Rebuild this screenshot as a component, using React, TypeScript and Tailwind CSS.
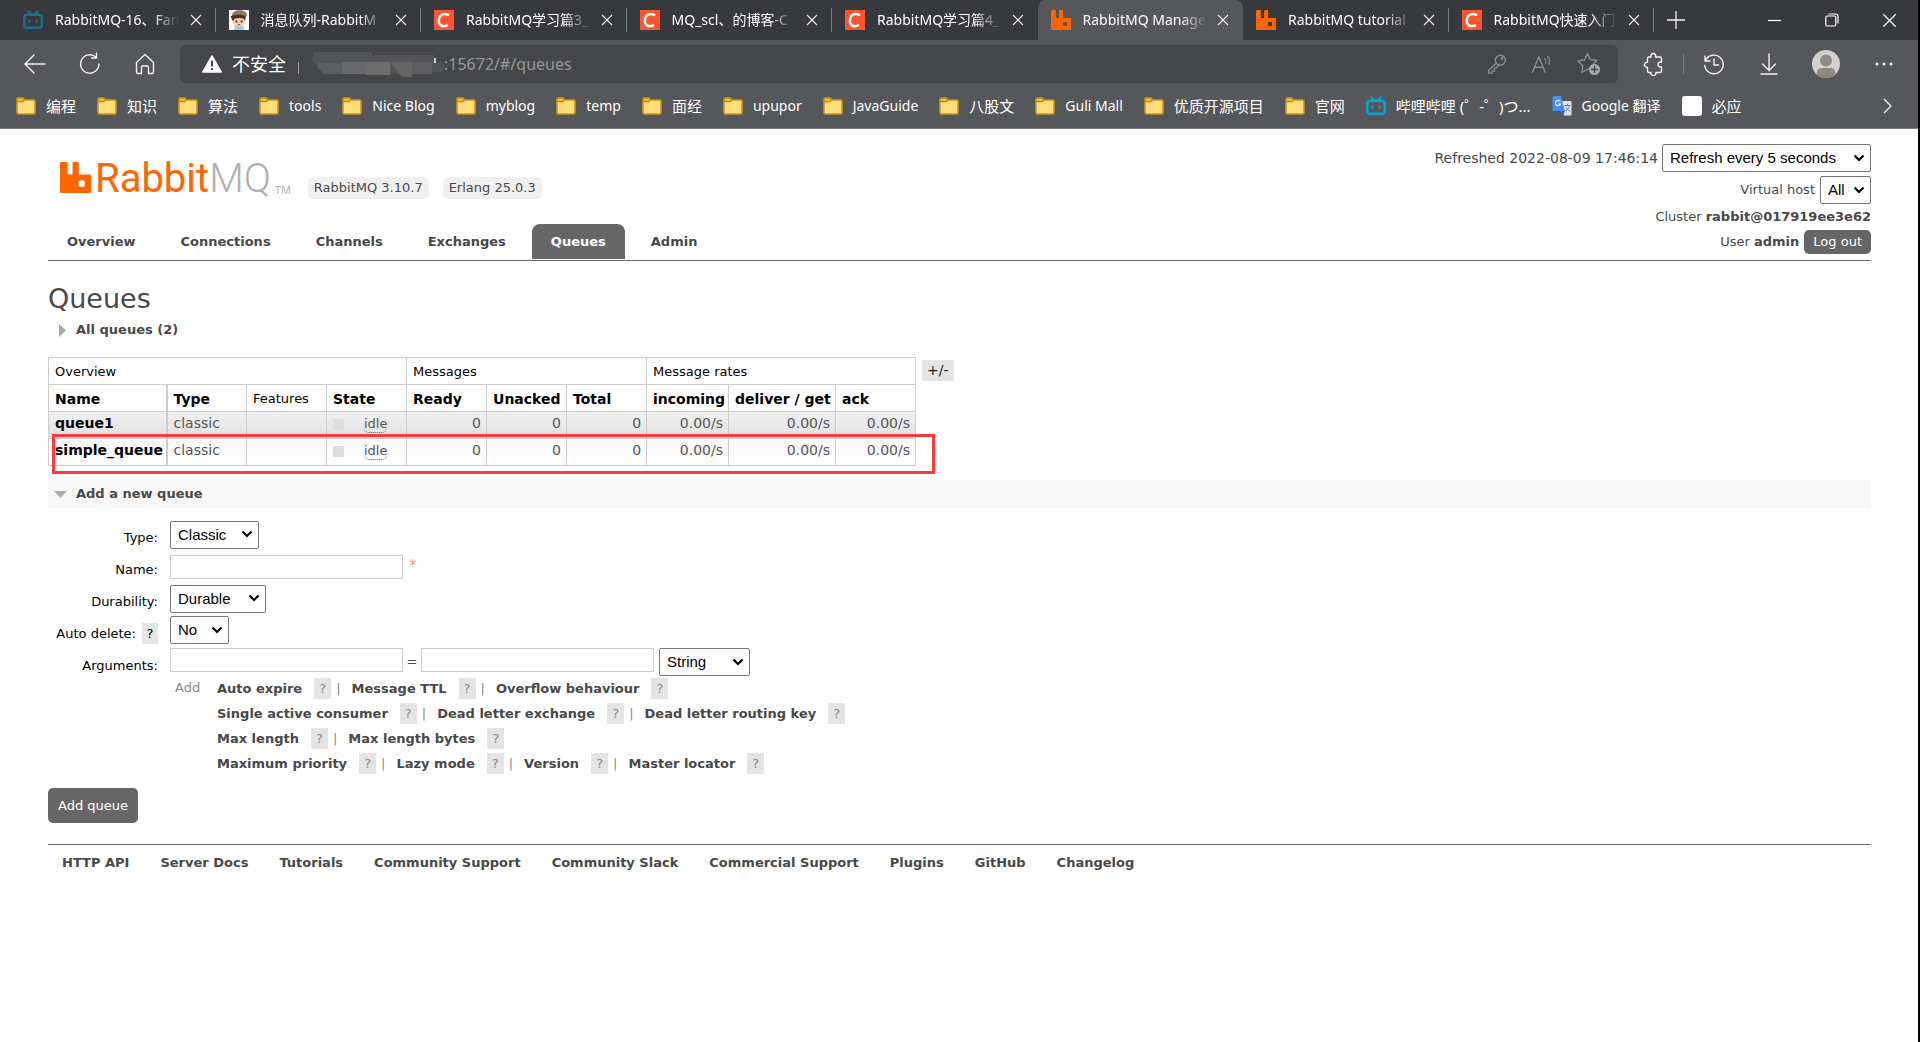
import React from "react";

const UI = "font-['Noto_Sans','Noto_Sans_CJK_SC',sans-serif]";

/* ---------- icons ---------- */

function Bilibili({ color }: { color: string }) {
  return (
    <svg width="20" height="20" viewBox="0 0 20 20" fill="none" stroke={color} strokeWidth="2.4" strokeLinecap="round" className="shrink-0">
      <rect x="1.3" y="4.8" width="17.4" height="13" rx="2.6" />
      <path d="M5.5 1.3 8 4.4M14.5 1.3 12 4.4" strokeWidth="2" />
      <path d="M6.4 10.2v1.6M13.6 10.2v1.6" strokeWidth="2" />
    </svg>
  );
}

function Portrait() {
  return (
    <svg width="20" height="20" viewBox="0 0 20 20" className="shrink-0">
      <rect width="20" height="20" fill="#fff" />
      <path d="M5.500 15.500h9l.8 4.500H4.700z" fill="#8fd3ea" />
      <path d="M7 16l-2 2M13 16l2 2" stroke="#f6cdb0" strokeWidth="1.500" />
      <path d="M4.200 6h11.600v6.500c0 2.300-2.600 4-5.800 4s-5.800-1.700-5.800-4z" fill="#f6cdb0" />
      <path d="M3 6.500C3 2.500 5.500.3 10.500.3S18 2.500 18 6l-2.500 1.200-5.500-.6-6 .9z" fill="#8a7a62" />
      <path d="M1.500 6.500c3-2.300 12-2.600 15.500.3l-1 4.200-1.500-2.500-5-.6-4 .8L4 11.500z" fill="#5b2c20" />
      <rect x="6.600" y="10.500" width="1.600" height="2" fill="#3a1d18" />
      <rect x="11.800" y="10.500" width="1.600" height="2" fill="#3a1d18" />
      <path d="M8.300 14h3.400l-1.700 1.400z" fill="#c0392b" />
    </svg>
  );
}

function Csdn() {
  return (
    <svg width="20" height="20" viewBox="0 0 20 20" className="shrink-0">
      <rect width="20" height="20" fill="#fc5531" />
      <path d="M15 5.400C13.800 4.400 12.400 4 10.900 4 7.300 4 5 6.800 4.800 10.400 4.600 13.900 6.500 16.200 9.700 16.200c1.600 0 3-.4 4.200-1.200" fill="none" stroke="#fff" strokeWidth="2.500" />
    </svg>
  );
}

function RabbitMark({ size, hole }: { size: number; hole: string }) {
  return (
    <svg width={size} height={size} viewBox="0 0 20 20" className="shrink-0">
      <path d="M.8 0h3.400q.7 0 .7.7V7.400q0 .6.600.6h2q.600 0 .600-.600V.7q0-.7.7-.7h2.600q.7 0 .7.7V7.400q0 .6.600.6h6.500q.8 0 .8.8v10.400q0 .8-.8.8H.8q-.8 0-.8-.8V.8Q0 0 .8 0z" fill="#f60" />
      <rect x="12" y="12" width="4" height="4" rx="1" fill={hole} />
    </svg>
  );
}

function Folder() {
  return (
    <svg width="20" height="18" viewBox="0 0 20 18" className="shrink-0">
      <path d="M1 2.500Q1 1 2.500 1H7l2 2h8.500Q19 3 19 4.500v11q0 1.500-1.500 1.500h-15Q1 17 1 15.500z" fill="#ffdc7c" stroke="#c79a1c" strokeWidth="1.600" />
      <path d="M1 2.500Q1 1 2.500 1H7l1.600 1.800L7 4.600H1z" fill="#f3bd2e" stroke="#b8860b" strokeWidth="1.200" />
    </svg>
  );
}

function Translate() {
  return (
    <svg width="20" height="20" viewBox="0 0 20 20" className="shrink-0">
      <path d="M9 5h9.500q1 0 1 1v12.500q0 1-1 1H12z" fill="#e1e3e6" />
      <path d="M1.500 0H9l4 15H1.500q-1 0-1-1V1q0-1 1-1z" fill="#4a8af4" />
      <path d="M8 15h5l-1.500 4z" fill="#3367d6" />
      <path d="M8.300 5.600A2.600 2.600 0 1 0 8.500 8H6.300" fill="none" stroke="#fff" strokeWidth="1.200" />
      <path d="M12.500 9.500h6M15.500 8v1.500M17.500 9.500c-.5 2.500-2 4.500-4 5.500M14 11c.8 1.800 2 3.300 4 4.300" fill="none" stroke="#6b7480" strokeWidth="1" />
    </svg>
  );
}

function Cross({ size, w }: { size: number; w: number }) {
  return (
    <svg width={size} height={size} viewBox="0 0 12 12" stroke="#f0f0f0" strokeWidth={w}>
      <path d="M1 1l10 10M11 1 1 11" />
    </svg>
  );
}

function Line({ children, size = 24, color = "#f2f2f2", w = 1.4 }: { children: React.ReactNode; size?: number; color?: string; w?: number }) {
  return (
    <svg width={size} height={size} viewBox="0 0 24 24" fill="none" stroke={color} strokeWidth={w} strokeLinecap="round" strokeLinejoin="round" className="shrink-0">
      {children}
    </svg>
  );
}

/* ---------- browser chrome ---------- */

const tabs = [
  { icon: <Bilibili color="#1b6f8c" />, title: "RabbitMQ-16、Fan" },
  { icon: <Portrait />, title: "消息队列-RabbitM" },
  { icon: <Csdn />, title: "RabbitMQ学习篇3_" },
  { icon: <Csdn />, title: "MQ_scl、的博客-C" },
  { icon: <Csdn />, title: "RabbitMQ学习篇4_" },
  { icon: <RabbitMark size={20} hole="#56575b" />, title: "RabbitMQ Manage", active: true },
  { icon: <RabbitMark size={20} hole="#38393c" />, title: "RabbitMQ tutorial" },
  { icon: <Csdn />, title: "RabbitMQ快速入门" },
];

function TabStrip() {
  return (
    <div className="flex h-10 bg-[#38393c] pl-[10px]">
      <div className="flex min-w-0 flex-1">
        {tabs.map((t, i) => (
          <div
            key={i}
            className={
              "flex min-w-0 flex-1 basis-0 items-center pl-[13px] " +
              (t.active ? "rounded-t-lg bg-[#56575b]" : "")
            }
          >
            {t.icon}
            <button className="ml-3 min-w-0 flex-1 overflow-hidden text-left text-sm whitespace-nowrap text-white [mask-image:linear-gradient(to_right,black_78%,transparent)]">
              {t.title}
            </button>
            <button aria-label="Close tab" className="ml-[10px]">
              <Cross size={12} w={1.1} />
            </button>
            <span
              className={
                "ml-[13px] h-6 w-px " +
                (t.active || tabs[i + 1]?.active ? "" : "bg-[#7a7b7e]")
              }
            />
          </div>
        ))}
      </div>
      <div className="flex w-[264px] shrink-0 items-center">
        <button aria-label="New tab" className="ml-[13px]">
          <svg width="18" height="18" viewBox="0 0 18 18" stroke="#f2f2f2" strokeWidth="1.300"><path d="M9 0v18M0 9h18" /></svg>
        </button>
        <button aria-label="Minimize" className="ml-[83px]">
          <svg width="13" height="13" viewBox="0 0 13 13" stroke="#fff" strokeWidth="1.200"><path d="M0 6.500h13" /></svg>
        </button>
        <button aria-label="Restore" className="ml-[44px]">
          <svg width="14" height="14" viewBox="0 0 14 14" fill="none" stroke="#fff" strokeWidth="1.200">
            <rect x=".8" y="3" width="10" height="10" rx="1.500" /><path d="M3.500 1h6.700Q13 1 13 3.800v6.700" />
          </svg>
        </button>
        <button aria-label="Close window" className="ml-[43px]">
          <Cross size={15} w={1.1} />
        </button>
      </div>
    </div>
  );
}

function Toolbar() {
  return (
    <div className="flex h-12 items-center pl-[23px]">
      <button aria-label="Back"><Line><path d="M2 12h20M11 3 2 12l9 9" /></Line></button>
      <button aria-label="Reload" className="ml-[31px]"><Line><path d="M21 12a9.200 9.200 0 1 1-3-6.800M18.500 1v5h-5" /></Line></button>
      <button aria-label="Home" className="ml-[31px]">
        <Line><path d="M3.500 10.500 12 2.500l8.500 8V20q0 1.500-1.500 1.500h-3.500V15q0-1-1-1h-5q-1 0-1 1v6.500H5q-1.500 0-1.500-1.500z" /></Line>
      </button>
      <div className="ml-[23px] flex h-[38px] min-w-0 flex-1 items-center rounded-md bg-[#454649] pr-[17px] pl-[22px]">
        <svg width="20" height="18" viewBox="0 0 20 18" className="shrink-0">
          <path d="M10 .8 19.200 17H.8z" fill="#fff" stroke="#fff" strokeWidth="1.400" strokeLinejoin="round" />
          <path d="M10 5.500v6M10 13v2" stroke="#454649" strokeWidth="2" />
        </svg>
        <span className="ml-[10px] text-lg text-white">不安全</span>
        <span className="mt-2 ml-[12px] h-3 w-px bg-[#a0a0a0]" />
        <svg width="138" height="28" viewBox="0 0 138 28" className="mr-1 ml-[13px] shrink-0">
          <path d="M1 2h59v4l4-1h58v7h7l3 3v5l-4 2h-24l-10 5H96l-6-3H12L6 18 1 11z" fill="#535457" />
          <path d="M6 13h24v11H12L6 18z" fill="#5d5e61" />
          <path d="M30 12h24v12H30z" fill="#66686b" />
          <path d="M54 12h24v13H54z" fill="#6c6d6c" />
          <path d="M78 12h22v15H90z" fill="#666463" />
          <path d="M100 12h20v12h-20z" fill="#5f5d60" />
          <path d="M123 8v5" stroke="#fff" strokeWidth="1.500" />
        </svg>
        <span className="-ml-[10px] truncate text-base text-[#97989b]">:15672/#/queues</span>
        <span className="flex-1" />
        <span className="flex items-center gap-6">
          <Line size={20} color="#8d8e91" w={1.6}><circle cx="16" cy="7.500" r="6" /><circle cx="18" cy="5.500" r=".8" /><path d="m11 11-9 8.500V23h4v-2.500h3V17h2l2.500-3.500" /></Line>
          <Line size={22} color="#8d8e91" w={1.5}><path d="M1.500 21 8.500 4l7 17M4 15.500h9M15 6c1.500 1.500 1.500 3 1 5M18 3.500c2.500 2.500 2.500 6 1.500 9" /></Line>
          <Line size={24} color="#8d8e91" w={1.4}><path d="m10.500 1.500 2.900 6 6.600 1-4.800 4.600M12 16.500l-7.200 4 1.100-6.600L1 9l6.600-1 2.900-6.500" /><circle cx="17.500" cy="17.500" r="5.500" fill="#a9aaac" stroke="none" /><path d="M17.500 14.500v6M14.500 17.500h6" stroke="#454649" /></Line>
        </span>
      </div>
      <div className="flex w-[300px] shrink-0 items-center">
        <button aria-label="Extensions" className="ml-[23px]"><Line><path d="M8 5h2.200a2.400 2.400 0 1 1 4.300 0H19q1.500 0 1.500 1.500v3.700a2.500 2.500 0 1 0 0 4.600v4Q20.500 20.500 19 20.500h-4.200a2.500 2.500 0 1 1-4.800 0H8q-1.500 0-1.500-1.500v-3.700a2.600 2.600 0 1 1 0-5.100V6.500Q6.500 5 8 5z" /></Line></button>
        <span className="ml-[18px] h-5 w-px bg-[#828386]" />
        <button aria-label="History" className="ml-[18px]"><Line><path d="M3 4v5h5M3.500 8.500a9.300 9.300 0 1 1-.8 5M12 7v6h4.500" /></Line></button>
        <button aria-label="Downloads" className="ml-[31px]"><Line><path d="M12 2v16M5.500 12l6.500 6.500 6.500-6.500M4 22h16" /></Line></button>
        <button aria-label="Profile" className="ml-[31px]">
          <svg width="28" height="28" viewBox="0 0 28 28"><circle cx="14" cy="14" r="14" fill="#d3d1cf" /><circle cx="14" cy="10.500" r="6" fill="#8f8985" /><path d="M4.500 24.300Q5 18 9 18h10q4 0 4.500 6.300A14 14 0 0 1 4.500 24.300z" fill="#8f8985" /></svg>
        </button>
        <button aria-label="More" className="ml-[35px]">
          <svg width="18" height="4" viewBox="0 0 18 4" fill="#f2f2f2"><circle cx="2" cy="2" r="1.500" /><circle cx="9" cy="2" r="1.500" /><circle cx="16" cy="2" r="1.500" /></svg>
        </button>
      </div>
    </div>
  );
}

const bookmarks: { label: string; icon?: React.ReactNode; cjk?: boolean }[] = [
  { label: "编程", cjk: true },
  { label: "知识", cjk: true },
  { label: "算法", cjk: true },
  { label: "tools" },
  { label: "Nice Blog" },
  { label: "myblog" },
  { label: "temp" },
  { label: "面经", cjk: true },
  { label: "upupor" },
  { label: "JavaGuide" },
  { label: "八股文", cjk: true },
  { label: "Guli Mall" },
  { label: "优质开源项目", cjk: true },
  { label: "官网", cjk: true },
  { label: "哔哩哔哩 (゜-゜)つ...", cjk: true, icon: <Bilibili color="#0aa4dc" /> },
  { label: "Google 翻译", icon: <Translate /> },
  { label: "必应", cjk: true, icon: <span className="size-5 shrink-0 rounded-[3px] bg-white" /> },
];

function Bookmarks() {
  return (
    <div className="flex h-10 items-center gap-[21px] pr-[25px] pb-1 pl-4 text-white">
      {bookmarks.map((b) => (
        <a key={b.label} href="#" className="flex items-center gap-[10px] whitespace-nowrap">
          {b.icon ?? <Folder />}
          <span className={b.cjk ? "text-[15px]" : "text-sm"}>{b.label}</span>
        </a>
      ))}
      <button aria-label="More bookmarks" className="ml-auto">
        <svg width="10" height="16" viewBox="0 0 10 16" fill="none" stroke="#f2f2f2" strokeWidth="1.300"><path d="m1 1 7 7-7 7" /></svg>
      </button>
    </div>
  );
}

/* ---------- page parts ---------- */

function Select({ id, label, options, className }: { id: string; label?: string; options: string[]; className: string }) {
  return (
    <span className="relative inline-flex">
      <select
        id={id}
        aria-label={label}
        className={"h-7 appearance-none rounded-[2px] border border-[#767676] bg-white pl-[7px] font-['Liberation_Sans',Arial,sans-serif] text-[15px] text-black " + className}
      >
        {options.map((o) => <option key={o}>{o}</option>)}
      </select>
      <svg width="12" height="8" viewBox="0 0 12 8" fill="none" stroke="#000" strokeWidth="2.200" className="pointer-events-none absolute top-[10px] right-[6px]">
        <path d="m1.500 1.500 4.500 4.500 4.500-4.500" />
      </svg>
    </span>
  );
}

const nav = ["Overview", "Connections", "Channels", "Exchanges", "Queues", "Admin"];

function Header() {
  return (
    <header className="flex items-end justify-between border-b border-[#666] pt-[15px]">
      <div className="flex flex-col">
        <div className="flex items-end pl-3">
          <a href="#" aria-label="RabbitMQ" className="flex h-[37px] items-start">
            <RabbitMark size={31} hole="#fff" />
            <span className="ml-1 font-[Roboto,sans-serif] text-[40px] leading-[34px] text-[#f60]">
              Rabbit<span className="font-light text-[#b0b0b0]">MQ</span>
            </span>
            <span className="ml-1 self-end pb-[2px] font-['Open_Sans',sans-serif] text-[11px] leading-[14px] text-[#aaa]">TM</span>
          </a>
          <span className="ml-[17px] rounded-[5px] bg-[#f0f0f0] px-[6px] text-[13px] leading-[22px]">RabbitMQ 3.10.7</span>
          <span className="ml-[14px] rounded-[5px] bg-[#f0f0f0] px-[6px] text-[13px] leading-[22px]">Erlang 25.0.3</span>
        </div>
        <nav className="mt-[25px] flex gap-[7px] pb-px">
          {nav.map((n) => (
            <a
              key={n}
              href="#"
              className={
                "rounded-t-lg px-[19px] text-[13px] leading-[35px] font-bold " +
                (n === "Queues" ? "bg-[#666] text-white" : "")
              }
            >
              {n}
            </a>
          ))}
        </nav>
      </div>
      <div className="flex flex-col items-end pb-[6px] text-[13px]">
        <div className="flex items-center gap-1">
          <span className="text-sm">Refreshed 2022-08-09 17:46:14</span>
          <Select id="refresh" label="Refresh interval" options={["Refresh every 5 seconds"]} className="w-[209px]" />
        </div>
        <div className="mt-1 flex items-center gap-[5px]">
          <label htmlFor="vhost">Virtual host</label>
          <Select id="vhost" options={["All"]} className="w-[51px]" />
        </div>
        <div className="mt-1 leading-[18px]">Cluster <b>rabbit@017919ee3e62</b></div>
        <div className="mt-1 flex items-center gap-[5px]">
          <span>User <b>admin</b></span>
          <button className="h-6 rounded-[5px] bg-[#666] px-[9px] text-white">Log out</button>
        </div>
      </div>
    </header>
  );
}

const queues = [
  { name: "queue1", row: "bg-linear-to-b from-[#f0f0f0] to-[#e0e0e0]" },
  { name: "simple_queue", row: "bg-linear-to-b from-[#f8f8f8] to-white" },
];

const cell = "border border-[#ccc] pr-0 pl-[6px] text-left ";
const widths = ["w-[118px]", "w-[80px]", "w-[80px]", "w-[80px]", "w-[80px]", "w-[80px]", "w-[80px]", "w-[82px]", "w-[107px]", "w-[80px]"];

function QueueTable() {
  return (
    <div className="flex items-start gap-[6px]">
      <div className="relative">
        <table className="w-[867px] table-fixed border-collapse leading-[18px] text-black">
          <colgroup>{widths.map((w, i) => <col key={i} className={w} />)}</colgroup>
          <thead>
            <tr className="h-[27px] text-[13px]">
              <th colSpan={4} className={cell + "pt-[2px] font-normal"}>Overview</th>
              <th colSpan={3} className={cell + "pt-[2px] font-normal"}>Messages</th>
              <th colSpan={3} className={cell + "pt-[2px] font-normal"}>Message rates</th>
            </tr>
            <tr className="h-[27px] text-[14px]">
              <th className={cell + "border-r-2 pt-[2px]"}>Name</th>
              <th className={cell + "pt-[2px]"}>Type</th>
              <th className={cell + "pt-[2px] text-[13px] font-normal"}>Features</th>
              <th className={cell + "pt-[2px]"}>State</th>
              <th className={cell + "pt-[2px]"}>Ready</th>
              <th className={cell + "pt-[2px] whitespace-nowrap"}>Unacked</th>
              <th className={cell + "pt-[2px]"}>Total</th>
              <th className={cell + "pt-[2px] whitespace-nowrap"}>incoming</th>
              <th className={cell + "pt-[2px] whitespace-nowrap"}>deliver / get</th>
              <th className={cell + "pt-[2px]"}>ack</th>
            </tr>
          </thead>
          <tbody>
            {queues.map((q) => (
              <tr key={q.name} className={"h-[27px] text-[14px] text-[#555] " + q.row}>
                <td className={cell + "border-r-2 pb-1"}><a href="#" className="font-bold text-black">{q.name}</a></td>
                <td className={cell + "pb-1"}>classic</td>
                <td className={cell} />
                <td className={cell + "pb-[2px]"}>
                  <span className="flex items-center gap-5 text-[13px]">
                    <span className="size-[11px] bg-[#ddd]" />
                    <span className="rounded-[5px] border-b border-dotted border-[#555] leading-[17px]">idle</span>
                  </span>
                </td>
                {["0", "0", "0", "0.00/s", "0.00/s", "0.00/s"].map((v, i) => (
                  <td key={i} className="border border-[#ccc] pr-[5px] pb-1 text-right">{v}</td>
                ))}
              </tr>
            ))}
          </tbody>
        </table>
        <div className="pointer-events-none absolute -right-[19px] -bottom-2 left-1 h-10 border-[3px] border-[#fc3a3a]" />
      </div>
      <button className="mt-[3px] h-[21px] bg-[#e4e4e4] px-[5px] text-[14px] leading-[21px] text-[#222]">+/-</button>
    </div>
  );
}

const help = "inline-block bg-[#e4e4e4] text-center leading-[21px] ";

const optionRows = [
  ["Auto expire", "Message TTL", "Overflow behaviour"],
  ["Single active consumer", "Dead letter exchange", "Dead letter routing key"],
  ["Max length", "Max length bytes"],
  ["Maximum priority", "Lazy mode", "Version", "Master locator"],
];

const textBox = "h-6 w-[233px] border border-[#ccc] bg-white px-1 text-[13px]";

function Row({ label, htmlFor, hint, children }: { label: string; htmlFor: string; hint?: boolean; children: React.ReactNode }) {
  return (
    <div className="flex h-8 items-start">
      <div className="mr-3 flex w-[110px] justify-end gap-[6px] pt-[7px] leading-[21px] whitespace-nowrap text-black">
        <label htmlFor={htmlFor}>{label}</label>
        {hint && <button type="button" className={help + "w-4"}>?</button>}
      </div>
      {children}
    </div>
  );
}

function AddQueue() {
  return (
    <form className="pt-3 text-[13px]" onSubmit={(e) => e.preventDefault()}>
      <Row label="Type:" htmlFor="type"><Select id="type" options={["Classic"]} className="mt-px w-[89px]" /></Row>
      <Row label="Name:" htmlFor="name">
        <input id="name" type="text" className={textBox + " mt-[3px]"} />
        <span className="ml-[6px] pt-[3px] text-[15px] text-[#ff8f8f]">*</span>
      </Row>
      <Row label="Durability:" htmlFor="durability"><Select id="durability" options={["Durable"]} className="mt-px w-[96px]" /></Row>
      <Row label="Auto delete:" htmlFor="autodelete" hint><Select id="autodelete" options={["No"]} className="w-[59px]" /></Row>
      <Row label="Arguments:" htmlFor="argkey">
        <input id="argkey" type="text" className={textBox} />
        <span className="w-[18px] pt-1 text-center">=</span>
        <input aria-label="Argument value" type="text" className={textBox + " mr-[5px]"} />
        <Select id="argtype" label="Argument type" options={["String"]} className="w-[91px]" />
      </Row>
      <div className="-mt-1 flex pl-[127px]">
        <span className="w-[42px] pt-[2px] text-[#888]">Add</span>
        <div className="flex flex-col">
          {optionRows.map((row) => (
            <div key={row[0]} className="flex h-[25px] items-center">
              {row.map((o, i) => (
                <span key={o} className="flex items-center">
                  {i > 0 && <span className="mr-[11px] ml-[5px] text-[#888]">|</span>}
                  <a href="#" className="font-bold">{o}</a>
                  <button type="button" className={help + "ml-3 w-[17px] text-[#888]"}>?</button>
                </span>
              ))}
            </div>
          ))}
        </div>
      </div>
      <button type="submit" className="mt-3 h-[35px] rounded-[5px] bg-[#666] px-[10px] text-white">Add queue</button>
    </form>
  );
}

const footer = ["HTTP API", "Server Docs", "Tutorials", "Community Support", "Community Slack", "Commercial Support", "Plugins", "GitHub", "Changelog"];

export default function App() {
  return (
    <div className="min-h-screen border-r-2 border-black bg-white">
      <div className={UI}>
        <TabStrip />
        <div className="border-b border-[#7c7d80] bg-[#56575b]">
          <Toolbar />
          <Bookmarks />
        </div>
      </div>
      <div className="pr-[47px] pl-12 font-['DejaVu_Sans',Verdana,sans-serif] text-[#484848]">
        <Header />
        <main>
          <h1 className="mt-[22px] text-[27px] leading-8">Queues</h1>
          <h2 className="flex h-[30px] items-center pl-[11px] text-[13px] font-bold">
            <svg width="7" height="13" viewBox="0 0 7 13" className="mr-[10px]"><path d="M0 0v13l7-6.500z" fill="#aaa" /></svg>
            All queues (2)
          </h2>
          <div className="pt-3"><QueueTable /></div>
          <h2 className="mt-[14px] flex h-7 items-center bg-[#f8f8f8] pl-[6px] text-[13px] font-bold">
            <svg width="13" height="7" viewBox="0 0 13 7" className="mr-[9px]"><path d="M0 0h13L6.500 7z" fill="#aaa" /></svg>
            Add a new queue
          </h2>
          <AddQueue />
        </main>
        <footer className="mt-[21px] flex gap-[31px] border-t border-[#666] pt-2 pl-[14px] text-[13px] font-bold">
          {footer.map((f) => <a key={f} href="#">{f}</a>)}
        </footer>
      </div>
    </div>
  );
}
